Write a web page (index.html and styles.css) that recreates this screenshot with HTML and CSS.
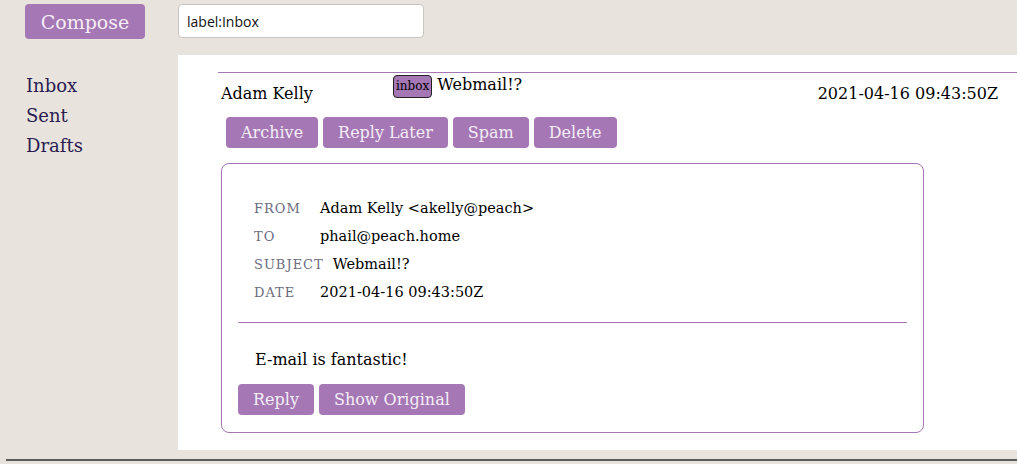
FILE: index.html
```html
<!DOCTYPE html>
<html>
<head>
<meta charset="utf-8">
<link rel="stylesheet" href="styles.css">
</head>
<body>
<div class="topbar">
  <button class="btn compose">Compose</button>
  <input class="search" type="text" value="label:Inbox">
</div>
<div class="layout">
  <nav class="sidebar">
    <a class="nav-link">Inbox</a>
    <a class="nav-link">Sent</a>
    <a class="nav-link">Drafts</a>
  </nav>
  <main class="main">
    <div class="thread-head">
      <div class="sender">Adam Kelly</div>
      <div class="subject"><span class="badge">inbox</span> Webmail!?</div>
      <div class="date">2021-04-16 09:43:50Z</div>
    </div>
    <div class="actions">
      <button class="btn">Archive</button>
      <button class="btn">Reply Later</button>
      <button class="btn">Spam</button>
      <button class="btn">Delete</button>
    </div>
    <div class="card">
      <div class="headers">
        <div class="hrow"><span class="hlabel">FROM</span><span class="hval">Adam Kelly &lt;akelly@peach&gt;</span></div>
        <div class="hrow"><span class="hlabel">TO</span><span class="hval">phail@peach.home</span></div>
        <div class="hrow"><span class="hlabel">SUBJECT</span><span class="hval">Webmail!?</span></div>
        <div class="hrow"><span class="hlabel">DATE</span><span class="hval">2021-04-16 09:43:50Z</span></div>
      </div>
      <div class="divider"></div>
      <p class="body-text">E-mail is fantastic!</p>
      <div class="card-actions">
        <button class="btn">Reply</button>
        <button class="btn">Show Original</button>
      </div>
    </div>
  </main>
</div>
<div class="footer-rule"></div>
</body>
</html>
```

FILE: styles.css
```css
* { box-sizing: border-box; }
html, body { margin: 0; padding: 0; }
body {
  background: #e8e4dd;
  font-family: "DejaVu Serif", serif;
  color: #000;
  width: 1017px;
  height: 464px;
  overflow: hidden;
}
.btn {
  font-family: "DejaVu Serif", serif;
  font-size: 16px;
  color: #f4eef6;
  background: #a577b4;
  border: none;
  border-radius: 4px;
  height: 31px;
  padding: 0 15px;
  margin: 0;
  cursor: pointer;
}
.topbar {
  display: flex;
  align-items: flex-start;
  gap: 33px;
  padding: 4px 0 0 25px;
  height: 55px;
}
.compose {
  width: 120px;
  height: 35px;
  font-size: 19px;
  padding: 0;
}
.search {
  width: 246px;
  height: 34px;
  border: 1px solid #c8c4c0;
  border-radius: 4px;
  background: #fff;
  font-family: "Open Sans", "DejaVu Sans", sans-serif;
  font-size: 14px;
  padding: 0 8px;
  color: #111;
}
.layout {
  display: flex;
  height: 395px;
}
.sidebar {
  width: 178px;
  display: flex;
  flex-direction: column;
  padding: 16px 0 0 26px;
}
.nav-link {
  font-size: 18px;
  line-height: 30px;
  color: #2b1d52;
}
.main {
  flex: 1;
  background: #fff;
  padding: 17px 0 0 40px;
}
.thread-head {
  display: flex;
  align-items: flex-start;
  border-top: 1px solid #a577b4;
  height: 45px;
  padding-right: 19px;
}
.sender {
  width: 175px;
  padding-left: 3px;
  font-size: 16px;
  margin-top: 11px;
}
.subject {
  flex: 1;
  font-size: 16px;
  margin-top: 2px;
}
.badge {
  display: inline-block;
  font-size: 12px;
  background: #a577b4;
  border: 1px solid #222;
  border-radius: 4px;
  padding: 4px 2px 5px;
  line-height: 12px;
  vertical-align: 0px;
}
.date {
  font-size: 16px;
  margin-top: 11px;
}
.actions {
  display: flex;
  gap: 5px;
  margin-left: 8px;
}
.card {
  width: 703px;
  height: 270px;
  margin: 15px 0 0 3px;
  border: 1px solid #a577b4;
  border-radius: 8px;
  padding: 36px 16px 0 16px;
}
.headers {
  padding-left: 16px;
}
.hrow {
  display: flex;
  align-items: baseline;
  height: 28px;
}
.hlabel {
  min-width: 57px;
  margin-right: 9px;
  font-size: 13px;
  letter-spacing: 1px;
  color: #6b6b80;
}
.hval {
  font-size: 14.5px;
}
.divider {
  border-top: 1px solid #a577b4;
  margin-top: 10px;
}
.body-text {
  margin: 27px 0 0 17px;
  font-size: 16px;
}
.card-actions {
  display: flex;
  gap: 5px;
  margin-top: 15px;
}
.card-actions .btn { height: 31px; }
.footer-rule {
  margin: 9px 0 0 6px;
  border-top: 2px solid #5c5c5c;
}
```
